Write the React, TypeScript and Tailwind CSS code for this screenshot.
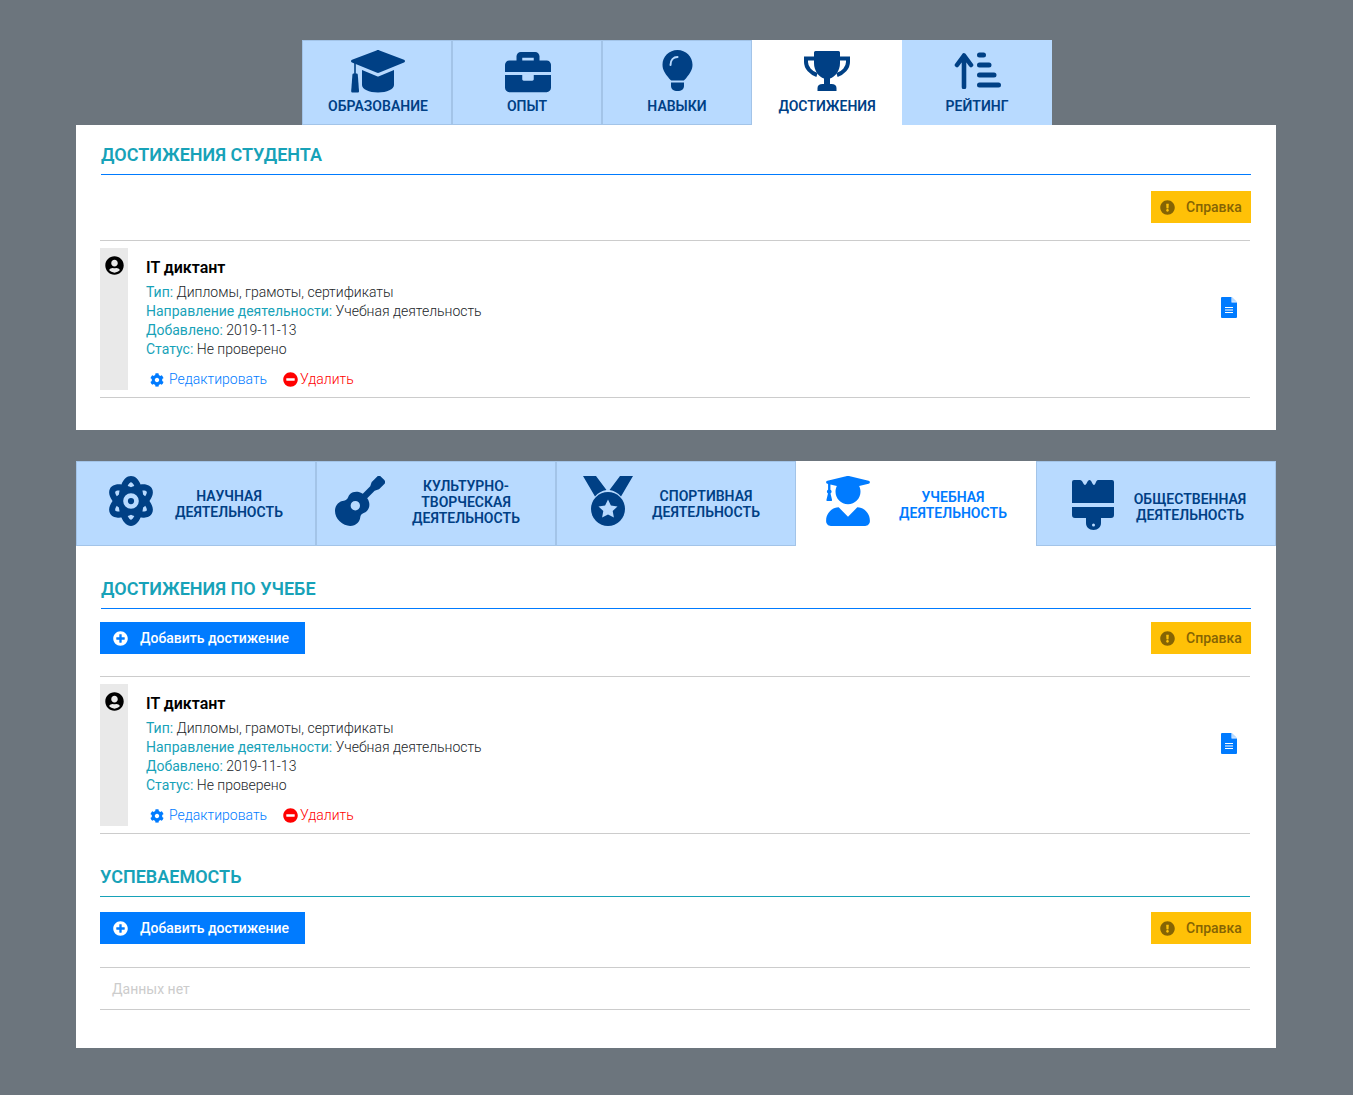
import type { ReactNode } from "react";
import {
  FaAtom,
  FaBriefcase,
  FaCog,
  FaExclamationCircle,
  FaGuitar,
  FaMinusCircle,
  FaPlusCircle,
  FaUserCircle,
  FaUserGraduate,
} from "react-icons/fa";

const tabBg = "#b8daff";

function CapIcon() {
  return (
    <svg width="54" height="43" viewBox="0 0 54 43" fill="currentColor" className="mt-[9px]">
      <path d="M25.5.4 1 9.7c-1.3.6-1.3 2.3 0 2.9l24.5 10c1 .4 2 .4 3 0l24.5-10c1.3-.6 1.3-2.3 0-2.9L28.5.4c-1-.4-2-.4-3 0Z" />
      <path d="M11 20l15 6.2c.7.3 1.3.3 2 0L43 20v15c0 4.200-7 7.500-16 7.500S11 39.200 11 35Z" />
      <path d="M4 13v11" stroke="currentColor" strokeWidth="1.600" />
      <path d="M2.800 23.500h2.600c.8 0 1.300.5 1.400 1.300L8 41c0 1-.5 1.500-1.300 1.500H1.500C.7 42.500.2 42 .2 41L1.400 24.800c.1-.8.6-1.300 1.400-1.300Z" />
    </svg>
  );
}

function BulbIcon() {
  return (
    <svg width="31" height="41" viewBox="0 0 30 41" fill="currentColor" className="mt-[9px]">
      <path d="M15 0C6.700 0 0 6.600 0 14.700 0 20 2.800 23.500 5.500 27c1.500 2 3 3.500 3.300 3.500h12.400c.3 0 1.800-1.500 3.300-3.500C27.200 23.500 30 20 30 14.700 30 6.600 23.300 0 15 0Z" />
      <path d="M8.500 32.500h13V36c0 3-2.500 5-6.500 5s-6.500-2-6.500-5Z" />
      <path d="M8 15c0-5 3-8 7-8" fill="none" stroke={tabBg} strokeWidth="2" strokeLinecap="round" />
    </svg>
  );
}

function TrophyIcon() {
  return (
    <svg width="46" height="40" viewBox="0 0 46 40" fill="currentColor" className="mt-[10px]">
      <path d="M10 1.500Q10 0 11.500 0h23Q36 0 36 1.500V12c0 8-5 14-10 15.500V33h1.500c3 0 5 1.500 5 4v3h-19v-3c0-2.500 2-4 5-4H20v-5.500C15 26 10 20 10 12Z" />
      <path d="M11 7.500H2V11c0 6 5 11 11 13M35 7.500h9V11c0 6-5 11-11 13" fill="none" stroke="currentColor" strokeWidth="4" />
    </svg>
  );
}

function SortIcon() {
  return (
    <svg width="47" height="37" viewBox="0 0 47 37" fill="none" stroke="currentColor" className="mt-[11px]">
      <path d="M10 3.500V35M3 13 10 3.500 17 13" strokeWidth="4.600" strokeLinecap="round" strokeLinejoin="round" />
      <path d="M25.500 3h4M25.500 13h9.500M25.500 23h14.500M25.500 33h19" strokeWidth="5" strokeLinecap="round" />
    </svg>
  );
}

function MedalIcon() {
  return (
    <svg width="50" height="50" viewBox="0 0 50 50" fill="currentColor">
      <path d="M0 0h13l10.500 14c-4.500.7-8.500 3-11.500 6.500ZM50 0H37L26.500 14c4.500.7 8.500 3 11.500 6.500Z" />
      <circle cx="25" cy="33" r="17" />
      <path
        d="M25 23.500l2.900 6 6.600.9-4.800 4.600 1.200 6.500-5.900-3.100-5.900 3.100 1.200-6.500-4.800-4.600 6.600-.9Z"
        fill={tabBg}
      />
    </svg>
  );
}

function BrushIcon() {
  return (
    <svg width="42" height="50" viewBox="0 0 42 50" fill="currentColor">
      <path d="M2 0h6c2.500 0 3.500 5 5 5s2.500-5 4.500-5 3 5 4.500 5 2-5 4-5h14q2 0 2 2v21H0V2q0-2 2-2Z" />
      <path d="M0 27h42v8q0 3-3 3H29v5c0 4-3 7-7.500 7S14 47 14 43v-5H3q-3 0-3-3Z" />
      <circle cx="21.500" cy="45" r="1.500" fill={tabBg} />
    </svg>
  );
}

function DocIcon() {
  return (
    <svg width="16" height="21" viewBox="0 0 16 21" fill="#007bff">
      <path d="M1 0h9.500v5.500H16V20q0 1-1 1H1q-1 0-1-1V1q0-1 1-1Z" />
      <path d="M11 0l5 4.800h-5Z" fill="#b8daff" />
      <path d="M4 10.500h8M4 13h8M4 15.500h8" stroke="#ffffff" strokeWidth="1" />
    </svg>
  );
}

const topTabs = [
  { label: "ОБРАЗОВАНИЕ", icon: <CapIcon />, box: "border-[#a3c4e8] bg-[#b8daff] pl-[2px]" },
  { label: "ОПЫТ", icon: <FaBriefcase size={46} className="mt-2 ml-px" />, box: "border-[#a3c4e8] bg-[#b8daff]" },
  { label: "НАВЫКИ", icon: <BulbIcon />, box: "border-[#a3c4e8] bg-[#b8daff]" },
  { label: "ДОСТИЖЕНИЯ", icon: <TrophyIcon />, box: "border-white bg-white" },
  { label: "РЕЙТИНГ", icon: <SortIcon />, box: "border-[#b8daff] bg-[#b8daff]" },
];

const bottomTabs = [
  { label: "НАУЧНАЯ ДЕЯТЕЛЬНОСТЬ", icon: <FaAtom size={50} className="mb-[5px]" />, pad: "pl-[29px]", text: "ml-[13px] pt-[1px]" },
  { label: "КУЛЬТУРНО- ТВОРЧЕСКАЯ ДЕЯТЕЛЬНОСТЬ", icon: <FaGuitar size={50} className="mb-[5px]" />, pad: "pl-[18px]", text: "ml-[21px] pb-[4px]" },
  { label: "СПОРТИВНАЯ ДЕЯТЕЛЬНОСТЬ", icon: <MedalIcon />, pad: "pl-[26px]", text: "ml-[13px]", iconWrap: "mb-[5px]" },
  { label: "УЧЕБНАЯ ДЕЯТЕЛЬНОСТЬ", icon: <FaUserGraduate size={50} className="mb-[5px]" />, pad: "pl-[26px]", text: "ml-[20px] pt-[2px]", active: true },
  { label: "ОБЩЕСТВЕННАЯ ДЕЯТЕЛЬНОСТЬ", icon: <BrushIcon />, pad: "pl-[35px]", text: "ml-[8px] pt-[6px]", iconWrap: "mt-[3px]" },
];

function Heading({ children, className }: { children: ReactNode; className: string }) {
  return (
    <h2 className={`border-b pb-[9px] text-[18px] leading-[21px] font-semibold text-[#17a2b8] ${className}`}>
      {children}
    </h2>
  );
}

function HelpButton() {
  return (
    <button className="flex h-8 w-[100px] items-center bg-[#ffc107] pl-[9px] text-[14px] font-medium text-[#856404]">
      <FaExclamationCircle size={15} />
      <span className="ml-[11px]">Справка</span>
    </button>
  );
}

function AddButton() {
  return (
    <button className="flex h-8 w-[205px] items-center bg-[#007bff] pl-[13px] text-[14px] font-medium text-white">
      <FaPlusCircle size={15} />
      <span className="ml-[12px]">Добавить достижение</span>
    </button>
  );
}

function Achievement() {
  return (
    <div className="mr-[26px] ml-6 border-y border-[#cccccc] py-[7px]">
      <div className="flex h-[142px]">
        <div className="flex w-7 justify-center bg-[#e9e9e9] pt-2 text-black">
          <FaUserCircle size={19} />
        </div>
        <div className="flex-1 pl-[18px]">
          <div className="pt-[10px] text-[16px] leading-[19px] font-semibold text-black">IT диктант</div>
          <div className="mt-[6px] text-[14px] leading-[19px] font-light text-[#212529]">
            <div><span className="font-normal text-[#17a2b8]">Тип:</span> Дипломы, грамоты, сертификаты</div>
            <div><span className="font-normal text-[#17a2b8]">Направление деятельности:</span> Учебная деятельность</div>
            <div><span className="font-normal text-[#17a2b8]">Добавлено:</span> 2019-11-13</div>
            <div><span className="font-normal text-[#17a2b8]">Статус:</span> Не проверено</div>
          </div>
          <div className="mt-[11px] flex items-center pl-1 text-[14px] leading-[19px] font-light">
            <FaCog size={14} className="text-[#007bff]" />
            <span className="ml-[5px] text-[#007bff]">Редактировать</span>
            <FaMinusCircle size={15} className="ml-4 text-[#ff0000]" />
            <span className="ml-[2px] text-[#ff0000]">Удалить</span>
          </div>
        </div>
        <div className="w-[29px] pt-[49px]">
          <DocIcon />
        </div>
      </div>
    </div>
  );
}

export default function App() {
  return (
    <div className="min-h-[1095px] bg-[#6c757d] pt-10 font-['Roboto',sans-serif]">
      <div className="ml-[76px] w-[1200px]">
        <div className="ml-[226px] flex">
          {topTabs.map((tab) => (
            <div key={tab.label} className={`flex h-[85px] w-[150px] flex-col items-center border text-[#004085] ${tab.box}`}>
              <div className="flex h-[55px] items-start">{tab.icon}</div>
              <div className="text-[14px] leading-[20px] font-semibold">{tab.label}</div>
            </div>
          ))}
        </div>

        <section className="h-[305px] bg-white pt-[19px]">
          <Heading className="mx-[25px] border-[#007bff]">ДОСТИЖЕНИЯ СТУДЕНТА</Heading>
          <div className="mx-[25px] mt-4 mb-[17px] flex justify-end">
            <HelpButton />
          </div>
          <Achievement />
        </section>

        <div className="mt-[31px] flex">
          {bottomTabs.map((tab) => (
            <div
              key={tab.label}
              className={`flex h-[85px] w-[240px] items-center border ${tab.pad} ${
                tab.active ? "border-white bg-white text-[#007bff]" : "border-[#a3c4e8] bg-[#b8daff] text-[#004085]"
              }`}
            >
              <div className={`flex w-[50px] ${tab.iconWrap ?? ""}`}>{tab.icon}</div>
              <div className={`w-[120px] text-center text-[14px] leading-[16px] font-semibold ${tab.text}`}>{tab.label}</div>
            </div>
          ))}
        </div>

        <section className="h-[502px] bg-white pt-8">
          <Heading className="mx-[25px] border-[#007bff]">ДОСТИЖЕНИЯ ПО УЧЕБЕ</Heading>
          <div className="mx-[24px] mt-[13px] mb-[22px] flex justify-between pr-px">
            <AddButton />
            <HelpButton />
          </div>
          <Achievement />
          <Heading className="mt-8 mr-[26px] ml-6 border-[#17a2b8]">УСПЕВАЕМОСТЬ</Heading>
          <div className="mx-[24px] mt-[15px] mb-[23px] flex justify-between pr-px">
            <AddButton />
            <HelpButton />
          </div>
          <div className="mr-[26px] ml-6 border-y border-[#cccccc] pt-3 pb-[10px] pl-3 text-[14px] leading-[19px] text-[#cccccc]">Данных нет</div>
        </section>
      </div>
    </div>
  );
}
